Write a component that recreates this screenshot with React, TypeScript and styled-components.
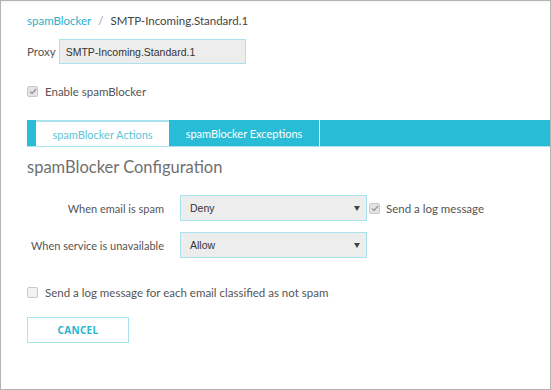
import styled, { createGlobalStyle } from "styled-components";

const teal = "#29bcd6";
const lightTeal = "#a9e3ee";

const GlobalStyle = createGlobalStyle`
  body {
    margin: 0;
    background: #ffffff;
    font-family: "Lato", "Open Sans", sans-serif;
  }
`;

const Frame = styled.div`
  box-sizing: border-box;
  width: 551px;
  height: 390px;
  border: 1px solid #b3b3b3;
  box-shadow: inset 0 4px 4px -3px rgba(0, 0, 0, 0.06);
  padding: 10px 0 0 26px;
  color: #555;
  font-size: 11.5px;
`;

const Crumbs = styled.div`
  display: flex;
  align-items: center;
  gap: 7px;
  height: 18px;
  font-size: 11.5px;
  color: #444;
`;

const CrumbLink = styled.span`
  color: #2bb0cc;
`;

const CrumbSep = styled.span`
  color: #999;
`;

const ProxyRow = styled.div`
  display: flex;
  align-items: center;
  gap: 3px;
  margin-top: 10px;
`;

const Label = styled.span`
  font-size: 11.5px;
  color: #555;
`;

const TextBox = styled.div`
  box-sizing: border-box;
  width: 187px;
  height: 25px;
  padding: 0 6px;
  display: flex;
  align-items: center;
  background: #ededed;
  border: 1px solid ${lightTeal};
  font-family: "Liberation Sans", Arial, sans-serif;
  font-size: 10.5px;
  color: #333;
`;

const CheckRow = styled.label<{ $top?: number }>`
  display: flex;
  align-items: center;
  gap: 7px;
  margin-top: ${(p) => p.$top ?? 0}px;
  font-size: 11.5px;
  color: #555;
  white-space: nowrap;
`;

const Box = styled.span<{ $checked?: boolean }>`
  box-sizing: border-box;
  width: 11px;
  height: 11px;
  border: 1px solid #c8c8c8;
  border-radius: 2px;
  background: ${(p) => (p.$checked ? "#e4e4e4" : "#f2f2f2")};
  display: flex;
  align-items: center;
  justify-content: center;
  flex-shrink: 0;
`;

const Tabs = styled.div`
  display: flex;
  height: 26px;
  margin-top: 22px;
  background: ${teal};
  border-bottom: 1px solid ${lightTeal};
  padding-left: 9px;
`;

const Tab = styled.div<{ $active?: boolean }>`
  box-sizing: border-box;
  display: flex;
  align-items: center;
  justify-content: center;
  width: ${(p) => (p.$active ? "133px" : "151px")};
  background: ${(p) => (p.$active ? "#ffffff" : teal)};
  color: ${(p) => (p.$active ? "#5ec5d9" : "#ffffff")};
  border-top: ${(p) => (p.$active ? `2px solid ${lightTeal}` : "none")};
  border-right: ${(p) => (p.$active ? "none" : "1px solid #ffffff")};
  font-size: 11px;
  white-space: nowrap;
`;

const Heading = styled.h2`
  margin: 10px 0 0 0;
  font-family: "Lato", "Open Sans", sans-serif;
  font-weight: 400;
  font-size: 16.5px;
  color: #707070;
`;

const Form = styled.div`
  display: grid;
  grid-template-columns: 137px 187px auto;
  column-gap: 16px;
  row-gap: 11px;
  align-items: center;
  margin-top: 18px;
`;

const RowLabel = styled.span`
  text-align: right;
  font-size: 11px;
  color: #555;
  white-space: nowrap;
`;

const Select = styled.div`
  box-sizing: border-box;
  height: 26px;
  display: flex;
  align-items: center;
  justify-content: space-between;
  padding: 0 6px 0 9px;
  background: #ededed;
  border: 1px solid ${lightTeal};
  font-family: "Liberation Sans", Arial, sans-serif;
  font-size: 10.5px;
  color: #333;
`;

const Caret = styled.span`
  width: 0;
  height: 0;
  border-left: 3px solid transparent;
  border-right: 3px solid transparent;
  border-top: 5px solid #444;
`;

const InlineCheck = styled(CheckRow)`
  margin-left: -14px;
  gap: 6px;
`;

const Button = styled.button`
  box-sizing: border-box;
  width: 102px;
  height: 26px;
  margin-top: 18px;
  background: #ffffff;
  border: 1px solid ${lightTeal};
  color: #29b3cf;
  font-family: "Open Sans", sans-serif;
  font-weight: 700;
  font-size: 10px;
  letter-spacing: 0.3px;
  cursor: pointer;
`;

function Check({ checked }: { checked?: boolean }) {
  return (
    <Box $checked={checked}>
      {checked && (
        <svg width="8" height="7" viewBox="0 0 8 7">
          <path d="M1 3.5 L3 5.5 L7 1" fill="none" stroke="#9a9a9a" strokeWidth="1.4" />
        </svg>
      )}
    </Box>
  );
}

export default function App() {
  return (
    <>
      <GlobalStyle />
      <Frame>
        <Crumbs>
          <CrumbLink>spamBlocker</CrumbLink>
          <CrumbSep>/</CrumbSep>
          <span>SMTP-Incoming.Standard.1</span>
        </Crumbs>
        <ProxyRow>
          <Label>Proxy</Label>
          <TextBox>SMTP-Incoming.Standard.1</TextBox>
        </ProxyRow>
        <CheckRow $top={21}>
          <Check checked />
          Enable spamBlocker
        </CheckRow>
        <Tabs>
          <Tab $active>spamBlocker Actions</Tab>
          <Tab>spamBlocker Exceptions</Tab>
        </Tabs>
        <Heading>spamBlocker Configuration</Heading>
        <Form>
          <RowLabel>When email is spam</RowLabel>
          <Select>
            Deny
            <Caret />
          </Select>
          <InlineCheck>
            <Check checked />
            Send a log message
          </InlineCheck>
          <RowLabel>When service is unavailable</RowLabel>
          <Select>
            Allow
            <Caret />
          </Select>
          <span />
        </Form>
        <CheckRow $top={28}>
          <Check />
          Send a log message for each email classified as not spam
        </CheckRow>
        <Button>CANCEL</Button>
      </Frame>
    </>
  );
}
